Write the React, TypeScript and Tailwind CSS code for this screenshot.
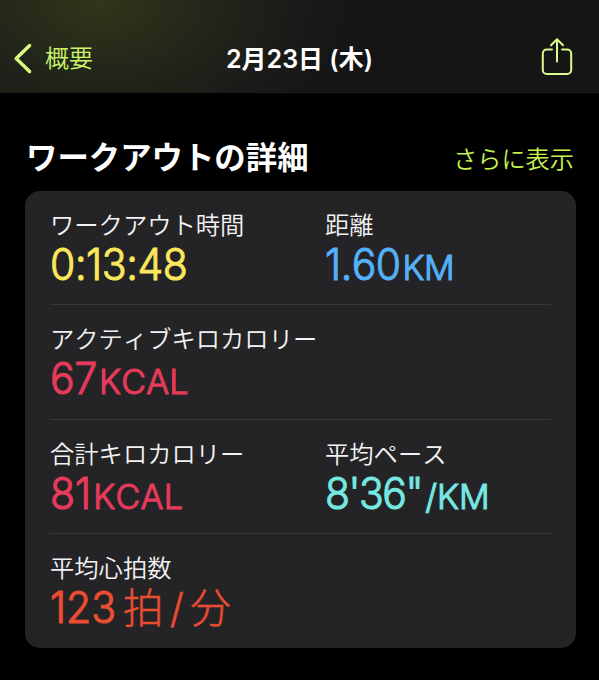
import { ReactNode } from "react";

function BackIcon() {
  return (
    <svg width="20" height="32" viewBox="0 0 20 32" fill="none" className="shrink-0">
      <path d="M16.6 2.5 3.2 15.5 16.6 28.5" stroke="#d9fb80" strokeWidth="3.4" strokeLinecap="round" strokeLinejoin="round" />
    </svg>
  );
}

function ShareIcon() {
  return (
    <svg width="32" height="40" viewBox="0 0 32 40" fill="none" stroke="#dcf98c" strokeWidth="2" strokeLinecap="round" strokeLinejoin="round">
      <path d="M11 12.6H5.8a4 4 0 0 0-4 4V33a4 4 0 0 0 4 4h20.4a4 4 0 0 0 4-4V16.6a4 4 0 0 0-4-4H21" />
      <path d="M16 24.5V2.5M10 8.3l6-6 6 6" />
    </svg>
  );
}

function Metric({ label, children, className }: { label: string; children: ReactNode; className: string }) {
  return (
    <div className="whitespace-nowrap">
      <div className="text-[24.3px] leading-[34px] font-[350] text-[#f2f2f4]">{label}</div>
      <div className={`flex h-[44px] items-baseline text-[44px] leading-[44px] font-light [-webkit-text-stroke:1.1px_currentColor] [stroke-linejoin:round] ${className}`}>
        {children}
      </div>
    </div>
  );
}

function Digits({ children, className = "" }: { children: ReactNode; className?: string }) {
  return <span className={`inline-block origin-left scale-x-[0.93] ${className}`}>{children}</span>;
}

function Unit({ children, className = "" }: { children: ReactNode; className?: string }) {
  return <span className={`text-[34px] ${className}`}>{children}</span>;
}

function Row({ children, last = false }: { children: ReactNode; last?: boolean }) {
  return (
    <div className={`grid h-[114.3px] grid-cols-[275px_225px] pt-[17px] ${last ? "" : "border-b border-[#38383a]"}`}>
      {children}
    </div>
  );
}

export default function App() {
  return (
    <div className="h-[680px] w-[599px] overflow-hidden bg-black font-['Inter','Noto_Sans_CJK_JP',sans-serif] text-white [font-kerning:none]">
      <header className="grid h-[93px] grid-cols-[1fr_auto_1fr] items-end border-b border-[#1e1e1e] bg-[#151515] bg-[radial-gradient(ellipse_260px_170px_at_100px_0px,#303719_0%,#22251a_45%,#1a1b18_75%,#151515_100%)] px-[13px] pb-[15px]">
        <a className="flex h-[36px] items-center gap-[12px] text-2xl font-[350] text-[#ccf56a]">
          <BackIcon />
          概要
        </a>
        <h1 className="h-[36px] text-[25px] leading-[36px] font-semibold">2月23日 (木)</h1>
        <div className="mr-[13px] flex justify-end">
          <ShareIcon />
        </div>
      </header>

      <main className="px-[25px] pt-[43px]">
        <div className="flex h-[55px] items-start justify-between">
          <h2 className="pl-px text-[31.4px] leading-[44px] font-bold">ワークアウトの詳細</h2>
          <a className="pt-[4px] text-[24.2px] leading-[40px] font-[350] text-[#c5f24f]">さらに表示</a>
        </div>

        <section className="h-[457px] w-[551px] rounded-[15px] bg-[#242426] px-[25px]">
          <Row>
            <Metric label="ワークアウト時間" className="text-[#fbe65c]">
              <Digits className="tracking-[-0.4px]">0:13:48</Digits>
            </Metric>
            <Metric label="距離" className="text-[#55b1f7]">
              <Digits className="tracking-[-0.5px]">1.60</Digits>
              <Unit className="-ml-[4px] tracking-[-0.5px]">KM</Unit>
            </Metric>
          </Row>
          <Row>
            <Metric label="アクティブキロカロリー" className="text-[#e63a5b]">
              <Digits>67</Digits>
              <Unit className="-ml-[2px] tracking-[0.2px]">KCAL</Unit>
            </Metric>
          </Row>
          <Row>
            <Metric label="合計キロカロリー" className="text-[#e63a5b]">
              <Digits>81</Digits>
              <Unit className="-ml-[1px] tracking-[0.3px]">KCAL</Unit>
            </Metric>
            <Metric label="平均ペース" className="text-[#75e8e2]">
              <Digits className="tracking-[-1.6px]">8'36"</Digits>
              <Unit className="-ml-[4px]">/KM</Unit>
            </Metric>
          </Row>
          <Row last>
            <Metric label="平均心拍数" className="text-[#ea4d32]">
              <Digits>123</Digits>
              <span className="ml-[2px] text-[40.5px] [-webkit-text-stroke-width:0.5px] [word-spacing:-5px]">拍 / 分</span>
            </Metric>
          </Row>
        </section>
      </main>
    </div>
  );
}
